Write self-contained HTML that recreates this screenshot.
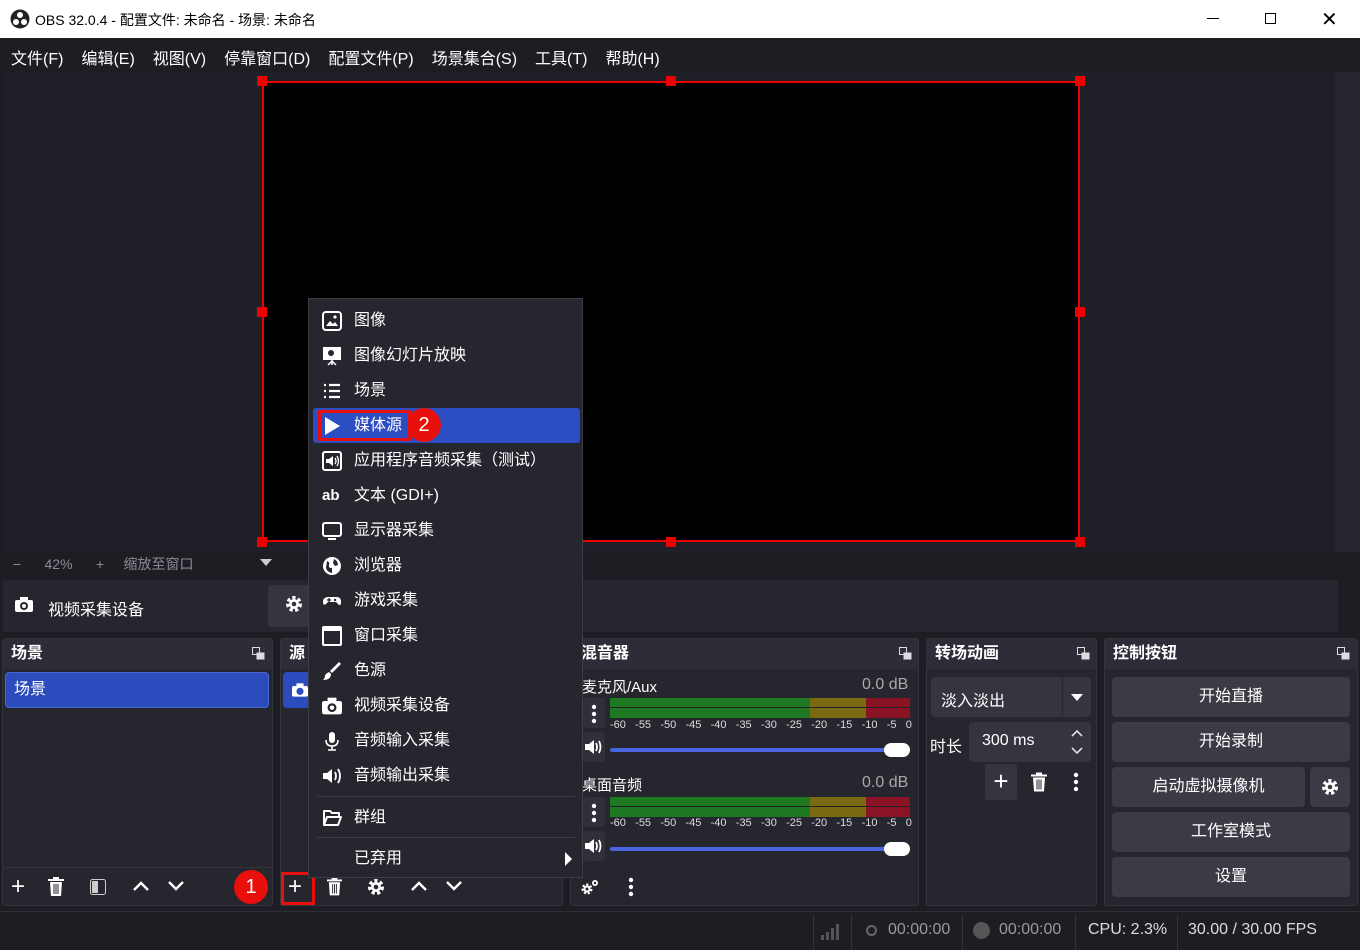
<!DOCTYPE html>
<html><head><meta charset="utf-8"><style>
*{box-sizing:border-box;margin:0;padding:0}
body{width:1360px;height:950px;overflow:hidden;background:#1d1e24;font-family:"Liberation Sans","Noto Sans CJK SC",sans-serif;color:#fff;position:relative}
.a{position:absolute}
.t{white-space:nowrap}
.hdr{position:absolute;height:30px;background:#2c2d36;font-size:16px;font-weight:bold;line-height:30px;padding-left:8px;border-radius:3px 3px 0 0}
.pnl{position:absolute;background:#25262e;border:1px solid #33343c;border-radius:3px}
.btn{position:absolute;background:#3a3b44;border-radius:4px;font-size:16px;text-align:center}
.mi{position:absolute;left:0;width:274px;height:35px;font-size:16px;line-height:35px}
.mi span{position:absolute;left:45px}
.mi svg{position:absolute;left:13px;top:8px}
.tk{position:absolute;display:flex;justify-content:space-between;width:302px;font-size:11px;color:#ddd}
.sb{position:absolute;width:22px;height:30px;background:#2f3038;border-radius:3px}
</style></head><body>
<!-- title -->
<div class="a" style="left:0;top:0;width:1360px;height:38px;background:#fff;color:#000">
<svg class="a" style="left:10px;top:9px" width="20" height="20" viewBox="0 0 20 20"><circle cx="10" cy="10" r="9.5" fill="#222"/><circle cx="10" cy="6" r="3" fill="#fff"/><circle cx="6" cy="13" r="3" fill="#fff"/><circle cx="14" cy="13" r="3" fill="#fff"/></svg>
<div class="a t" style="left:35px;top:10px;font-size:14px">OBS 32.0.4 - 配置文件: 未命名 - 场景: 未命名</div>
<div class="a" style="left:1207px;top:18px;width:12px;height:1px;background:#000"></div>
<div class="a" style="left:1265px;top:13px;width:11px;height:11px;border:1px solid #000"></div>
<div class="a t" style="left:1321px;top:7px;font-size:20px">✕</div>
</div>
<!-- menubar -->
<div class="a t" style="left:11px;top:45px;font-size:16px;word-spacing:0">
<span style="margin-right:18px">文件(F)</span><span style="margin-right:18px">编辑(E)</span><span style="margin-right:18px">视图(V)</span><span style="margin-right:18px">停靠窗口(D)</span><span style="margin-right:18px">配置文件(P)</span><span style="margin-right:18px">场景集合(S)</span><span style="margin-right:18px">工具(T)</span><span>帮助(H)</span></div>
<!-- preview -->
<div class="a" style="left:5px;top:72px;width:1330px;height:480px;background:#1f2027"></div>
<div class="a" style="left:1335px;top:72px;width:25px;height:480px;background:#25262d"></div>
<div class="a" style="left:262px;top:81px;width:818px;height:461px;background:#000;border:2px solid #e00"></div>
<div class="a" style="left:257px;top:76px;width:10px;height:10px;background:#e00"></div>
<div class="a" style="left:666px;top:76px;width:10px;height:10px;background:#e00"></div>
<div class="a" style="left:1075px;top:76px;width:10px;height:10px;background:#e00"></div>
<div class="a" style="left:257px;top:307px;width:10px;height:10px;background:#e00"></div>
<div class="a" style="left:1075px;top:307px;width:10px;height:10px;background:#e00"></div>
<div class="a" style="left:257px;top:537px;width:10px;height:10px;background:#e00"></div>
<div class="a" style="left:666px;top:537px;width:10px;height:10px;background:#e00"></div>
<div class="a" style="left:1075px;top:537px;width:10px;height:10px;background:#e00"></div>
<div class="a t" style="left:13px;top:554px;font-size:14px;color:#8a8b93">−&nbsp;&nbsp;&nbsp;&nbsp;&nbsp;&nbsp;42%&nbsp;&nbsp;&nbsp;&nbsp;&nbsp;&nbsp;+&nbsp;&nbsp;&nbsp;&nbsp;&nbsp;缩放至窗口</div>
<div class="a" style="left:260px;top:559px;border-left:6px solid transparent;border-right:6px solid transparent;border-top:7px solid #ccc"></div>
<!-- source toolbar -->
<div class="a" style="left:3px;top:580px;width:1335px;height:52px;background:#25262e"></div>
<svg class="a" style="left:15px;top:597px" width="18" height="15" viewBox="0 0 18 15"><rect x="0" y="3" width="18" height="12" rx="2" fill="#fff"/><rect x="5" y="0" width="8" height="4" fill="#fff"/><circle cx="9" cy="9" r="4" fill="#25262e"/><circle cx="9" cy="9" r="2" fill="#fff"/></svg>
<div class="a t" style="left:48px;top:596px;font-size:16px">视频采集设备</div>
<div class="a" style="left:268px;top:585px;width:45px;height:42px;background:#34353e;border-radius:4px"></div>
<svg class="a" style="left:285px;top:595px" width="18" height="18" viewBox="0 0 18 18"><circle cx="9" cy="9" r="6" fill="none" stroke="#fff" stroke-width="4" stroke-dasharray="3 2.3"/><circle cx="9" cy="9" r="5" fill="#fff"/><circle cx="9" cy="9" r="2.3" fill="#34353e"/></svg>
<!-- scenes -->
<div class="pnl" style="left:2px;top:638px;width:271px;height:268px"></div>
<div class="hdr" style="left:3px;top:639px;width:269px">场景</div>
<div class="a" style="left:5px;top:672px;width:264px;height:36px;background:#2c4bbd;border:1px solid #4a66d0;border-radius:4px;font-size:16px;line-height:34px;padding-left:8px">场景</div>
<div class="a" style="left:3px;top:867px;width:269px;height:1px;background:#33343c"></div>
<div class="a t" style="left:11px;top:873px;font-size:24px">+</div>
<svg class="a" style="left:48px;top:877px" width="16" height="19" viewBox="0 0 16 19"><rect x="0" y="2" width="16" height="2" fill="#fff"/><rect x="5" y="0" width="6" height="2" fill="#fff"/><path d="M2 5h12l-1 14H3z" fill="#fff"/><path d="M6 7v10M8 7v10M10 7v10" stroke="#25262e" stroke-width="1"/></svg>
<svg class="a" style="left:90px;top:879px" width="16" height="16" viewBox="0 0 16 16"><rect x="0.5" y="0.5" width="15" height="15" rx="2" fill="none" stroke="#ccc"/><rect x="2" y="2" width="6" height="12" fill="#ccc"/></svg>
<svg class="a" style="left:132px;top:880px" width="18" height="12" viewBox="0 0 18 12"><path d="M2 10l7-7 7 7" fill="none" stroke="#fff" stroke-width="2.4"/></svg>
<svg class="a" style="left:167px;top:880px" width="18" height="12" viewBox="0 0 18 12"><path d="M2 2l7 7 7-7" fill="none" stroke="#fff" stroke-width="2.4"/></svg>
<div class="a" style="left:234px;top:870px;width:34px;height:34px;border-radius:50%;background:#e8100c;font-size:20px;line-height:34px;text-align:center">1</div>
<!-- sources -->
<div class="pnl" style="left:280px;top:638px;width:283px;height:268px"></div>
<div class="hdr" style="left:281px;top:639px;width:281px">源</div>
<div class="a" style="left:283px;top:672px;width:40px;height:36px;background:#2c4bbd;border-radius:4px"></div>
<svg class="a" style="left:292px;top:683px" width="16" height="14" viewBox="0 0 18 15"><rect x="0" y="3" width="18" height="12" rx="2" fill="#fff"/><rect x="5" y="0" width="8" height="4" fill="#fff"/><circle cx="9" cy="9" r="4" fill="#2c4bbd"/></svg>
<div class="a" style="left:281px;top:872px;width:34px;height:33px;border:3px solid #e8100c"></div>
<div class="a t" style="left:288px;top:873px;font-size:24px">+</div>
<svg class="a" style="left:327px;top:877px" width="15" height="19" viewBox="0 0 16 19"><rect x="0" y="2" width="16" height="2" fill="#fff"/><rect x="5" y="0" width="6" height="2" fill="#fff"/><path d="M2 5h12l-1 14H3z" fill="#fff"/><path d="M6 7v10M8 7v10M10 7v10" stroke="#25262e"/></svg>
<svg class="a" style="left:367px;top:878px" width="18" height="18" viewBox="0 0 18 18"><circle cx="9" cy="9" r="6" fill="none" stroke="#fff" stroke-width="4" stroke-dasharray="3 2.3"/><circle cx="9" cy="9" r="5" fill="#fff"/><circle cx="9" cy="9" r="2.3" fill="#25262e"/></svg>
<svg class="a" style="left:410px;top:880px" width="18" height="12" viewBox="0 0 18 12"><path d="M2 10l7-7 7 7" fill="none" stroke="#fff" stroke-width="2.4"/></svg>
<svg class="a" style="left:445px;top:880px" width="18" height="12" viewBox="0 0 18 12"><path d="M2 2l7 7 7-7" fill="none" stroke="#fff" stroke-width="2.4"/></svg>
<!-- mixer -->
<div class="pnl" style="left:570px;top:638px;width:349px;height:268px"></div>
<div class="hdr" style="left:571px;top:639px;width:347px;padding-left:10px">混音器</div>
<div class="a t" style="left:582px;top:676px;font-size:15px">麦克风/Aux</div>
<div class="a t" style="left:862px;top:676px;font-size:16px;color:#aaa">0.0 dB</div>
<div class="a" style="left:610px;top:698px;width:200px;height:20px;background:#1d7a22"></div>
<div class="a" style="left:810px;top:698px;width:56px;height:20px;background:#7a6a12"></div>
<div class="a" style="left:866px;top:698px;width:44px;height:20px;background:#8a1325"></div>
<div class="a" style="left:610px;top:707px;width:300px;height:1px;background:#222"></div>
<div class="tk" style="left:610px;top:719px"><span>-60</span><span>-55</span><span>-50</span><span>-45</span><span>-40</span><span>-35</span><span>-30</span><span>-25</span><span>-20</span><span>-15</span><span>-10</span><span>-5</span><span>0</span></div>
<div class="a" style="left:610px;top:748px;width:290px;height:4px;background:#4b64e0;border-radius:2px"></div>
<div class="a" style="left:884px;top:743px;width:26px;height:14px;background:#fff;border-radius:7px"></div>
<div class="a t" style="left:582px;top:774px;font-size:15px">桌面音频</div>
<div class="a t" style="left:862px;top:774px;font-size:16px;color:#aaa">0.0 dB</div>
<div class="a" style="left:610px;top:797px;width:200px;height:20px;background:#1d7a22"></div>
<div class="a" style="left:810px;top:797px;width:56px;height:20px;background:#7a6a12"></div>
<div class="a" style="left:866px;top:797px;width:44px;height:20px;background:#8a1325"></div>
<div class="a" style="left:610px;top:806px;width:300px;height:1px;background:#222"></div>
<div class="tk" style="left:610px;top:817px"><span>-60</span><span>-55</span><span>-50</span><span>-45</span><span>-40</span><span>-35</span><span>-30</span><span>-25</span><span>-20</span><span>-15</span><span>-10</span><span>-5</span><span>0</span></div>
<div class="a" style="left:610px;top:847px;width:290px;height:4px;background:#4b64e0;border-radius:2px"></div>
<div class="a" style="left:884px;top:842px;width:26px;height:14px;background:#fff;border-radius:7px"></div>
<div class="sb" style="left:583px;top:698px"></div>
<div class="sb" style="left:583px;top:732px"></div>
<div class="sb" style="left:583px;top:797px"></div>
<div class="sb" style="left:583px;top:831px"></div>
<svg class="a" style="left:591px;top:704px" width="6" height="20" viewBox="0 0 6 20"><circle cx="3" cy="3" r="2.2" fill="#fff"/><circle cx="3" cy="10" r="2.2" fill="#fff"/><circle cx="3" cy="17" r="2.2" fill="#fff"/></svg>
<svg class="a" style="left:591px;top:803px" width="6" height="20" viewBox="0 0 6 20"><circle cx="3" cy="3" r="2.2" fill="#fff"/><circle cx="3" cy="10" r="2.2" fill="#fff"/><circle cx="3" cy="17" r="2.2" fill="#fff"/></svg>
<svg class="a" style="left:584px;top:738px" width="20" height="18" viewBox="0 0 20 18"><path d="M1 6h4l5-4v14l-5-4H1z" fill="#fff"/><path d="M12 5q2 4 0 8M15 3q3 6 0 12" fill="none" stroke="#fff" stroke-width="1.8"/></svg>
<svg class="a" style="left:584px;top:837px" width="20" height="18" viewBox="0 0 20 18"><path d="M1 6h4l5-4v14l-5-4H1z" fill="#fff"/><path d="M12 5q2 4 0 8M15 3q3 6 0 12" fill="none" stroke="#fff" stroke-width="1.8"/></svg>
<svg class="a" style="left:580px;top:878px" width="20" height="18" viewBox="0 0 20 18"><circle cx="7" cy="11" r="4" fill="none" stroke="#fff" stroke-width="3" stroke-dasharray="2 1.6"/><circle cx="7" cy="11" r="3.5" fill="#fff"/><circle cx="7" cy="11" r="1.5" fill="#25262e"/><circle cx="15" cy="5" r="3" fill="#fff"/><circle cx="15" cy="5" r="1.2" fill="#25262e"/></svg>
<svg class="a" style="left:628px;top:877px" width="6" height="20" viewBox="0 0 6 20"><circle cx="3" cy="3" r="2.2" fill="#fff"/><circle cx="3" cy="10" r="2.2" fill="#fff"/><circle cx="3" cy="17" r="2.2" fill="#fff"/></svg>
<!-- transitions -->
<div class="pnl" style="left:926px;top:638px;width:171px;height:268px"></div>
<div class="hdr" style="left:927px;top:639px;width:169px">转场动画</div>
<div class="a" style="left:931px;top:677px;width:160px;height:40px;background:#34353e;border-radius:4px"></div>
<div class="a" style="left:1062px;top:677px;width:1px;height:40px;background:#26272f"></div>
<div class="a t" style="left:941px;top:687px;font-size:16px">淡入淡出</div>
<div class="a" style="left:1071px;top:694px;border-left:6px solid transparent;border-right:6px solid transparent;border-top:7px solid #fff"></div>
<div class="a t" style="left:930px;top:733px;font-size:16px">时长</div>
<div class="a" style="left:969px;top:722px;width:122px;height:40px;background:#34353e;border-radius:4px"></div>
<div class="a t" style="left:982px;top:732px;font-size:16px">300 ms</div>
<svg class="a" style="left:1070px;top:727px" width="14" height="30" viewBox="0 0 14 30"><path d="M2 9l5-5 5 5M2 21l5 5 5-5" fill="none" stroke="#ddd" stroke-width="1.6"/></svg>
<div class="a" style="left:985px;top:764px;width:32px;height:36px;background:#34353e;border-radius:3px;font-size:26px;line-height:34px;text-align:center">+</div>
<svg class="a" style="left:1031px;top:772px" width="16" height="20" viewBox="0 0 16 19"><rect x="0" y="2" width="16" height="2" fill="#fff"/><rect x="5" y="0" width="6" height="2" fill="#fff"/><path d="M2 5h12l-1 14H3z" fill="#fff"/><path d="M6 7v10M8 7v10M10 7v10" stroke="#25262e"/></svg>
<svg class="a" style="left:1073px;top:772px" width="6" height="20" viewBox="0 0 6 20"><circle cx="3" cy="3" r="2.2" fill="#fff"/><circle cx="3" cy="10" r="2.2" fill="#fff"/><circle cx="3" cy="17" r="2.2" fill="#fff"/></svg>
<!-- controls -->
<div class="pnl" style="left:1104px;top:638px;width:254px;height:268px"></div>
<div class="hdr" style="left:1105px;top:639px;width:252px">控制按钮</div>
<div class="btn" style="left:1112px;top:677px;width:238px;height:40px;line-height:40px">开始直播</div>
<div class="btn" style="left:1112px;top:722px;width:238px;height:40px;line-height:40px">开始录制</div>
<div class="btn" style="left:1112px;top:767px;width:193px;height:40px;line-height:40px">启动虚拟摄像机</div>
<div class="btn" style="left:1310px;top:767px;width:40px;height:40px"></div>
<svg class="a" style="left:1321px;top:778px" width="18" height="18" viewBox="0 0 18 18"><circle cx="9" cy="9" r="6" fill="none" stroke="#fff" stroke-width="4" stroke-dasharray="3 2.3"/><circle cx="9" cy="9" r="5" fill="#fff"/><circle cx="9" cy="9" r="2.3" fill="#3a3b44"/></svg>
<div class="btn" style="left:1112px;top:812px;width:238px;height:40px;line-height:40px">工作室模式</div>
<div class="btn" style="left:1112px;top:857px;width:238px;height:40px;line-height:40px">设置</div>
<!-- dock icons -->
<svg class="a" style="left:252px;top:647px" width="13" height="13" viewBox="0 0 13 13"><rect x="0.5" y="0.5" width="7" height="7" fill="none" stroke="#ddd"/><rect x="4.5" y="5.5" width="8" height="7" fill="#ddd"/></svg>
<svg class="a" style="left:899px;top:647px" width="13" height="13" viewBox="0 0 13 13"><rect x="0.5" y="0.5" width="7" height="7" fill="none" stroke="#ddd"/><rect x="4.5" y="5.5" width="8" height="7" fill="#ddd"/></svg>
<svg class="a" style="left:1077px;top:647px" width="13" height="13" viewBox="0 0 13 13"><rect x="0.5" y="0.5" width="7" height="7" fill="none" stroke="#ddd"/><rect x="4.5" y="5.5" width="8" height="7" fill="#ddd"/></svg>
<svg class="a" style="left:1337px;top:647px" width="13" height="13" viewBox="0 0 13 13"><rect x="0.5" y="0.5" width="7" height="7" fill="none" stroke="#ddd"/><rect x="4.5" y="5.5" width="8" height="7" fill="#ddd"/></svg>
<!-- status -->
<div class="a" style="left:0;top:911px;width:1360px;height:1px;background:#2e2f36"></div>
<div class="a" style="left:813px;top:915px;width:1px;height:35px;background:#33343b"></div>
<div class="a" style="left:851px;top:915px;width:1px;height:35px;background:#33343b"></div>
<div class="a" style="left:962px;top:915px;width:1px;height:35px;background:#33343b"></div>
<div class="a" style="left:1075px;top:915px;width:1px;height:35px;background:#33343b"></div>
<div class="a" style="left:1177px;top:915px;width:1px;height:35px;background:#33343b"></div>
<svg class="a" style="left:820px;top:922px" width="22" height="18" viewBox="0 0 22 18"><rect x="1" y="13" width="3" height="5" fill="#555"/><rect x="6" y="10" width="3" height="8" fill="#555"/><rect x="11" y="6" width="3" height="12" fill="#555"/><rect x="16" y="2" width="3" height="16" fill="#555"/></svg>
<div class="a" style="left:866px;top:925px;width:11px;height:11px;border-radius:50%;border:2px solid #666"></div>
<div class="a t" style="left:888px;top:921px;font-size:16px;color:#999">00:00:00</div>
<div class="a" style="left:973px;top:922px;width:17px;height:17px;border-radius:50%;background:#555"></div>
<div class="a t" style="left:999px;top:921px;font-size:16px;color:#999">00:00:00</div>
<div class="a t" style="left:1088px;top:921px;font-size:16px;color:#ddd">CPU: 2.3%</div>
<div class="a t" style="left:1188px;top:921px;font-size:16px;color:#ddd">30.00 / 30.00 FPS</div>
<!-- context menu -->
<div class="a" style="left:308px;top:298px;width:275px;height:580px;background:#25262e;border:1px solid #3c3d45">
<div class="a" style="left:4px;top:109px;width:267px;height:35px;background:#2d4ec2;border-radius:3px"></div>
<div class="a" style="left:9px;top:111px;width:93px;height:31px;border:3px solid #e8100c"></div>
<div class="a" style="left:98px;top:109px;width:34px;height:34px;border-radius:50%;background:#e8100c;font-size:20px;line-height:34px;text-align:center">2</div>
<div class="mi" style="top:4px"><svg width="20" height="20" viewBox="0 0 20 20"><rect x="1" y="1" width="18" height="18" rx="3" fill="none" stroke="#fff" stroke-width="2"/><path d="M4 15l4-5 3 3 2-2 3 4z" fill="#fff"/><circle cx="13" cy="6" r="1.6" fill="#fff"/></svg><span>图像</span></div>
<div class="mi" style="top:39px"><svg width="20" height="20" viewBox="0 0 20 20"><rect x="1" y="1" width="18" height="13" fill="#fff"/><circle cx="9" cy="7" r="3" fill="#25262e"/><path d="M10 14v5M10 15l-4 4M10 15l4 4" stroke="#fff" stroke-width="1.5"/></svg><span>图像幻灯片放映</span></div>
<div class="mi" style="top:74px"><svg width="20" height="20" viewBox="0 0 20 20"><path d="M2 4h2M7 4h11M2 10h2M7 10h11M2 16h2M7 16h11" stroke="#fff" stroke-width="2.2"/></svg><span>场景</span></div>
<div class="mi" style="top:109px"><svg width="20" height="20" viewBox="0 0 20 20"><path d="M3 1l15 9-15 9z" fill="#fff"/></svg><span>媒体源</span></div>
<div class="mi" style="top:144px"><svg width="20" height="20" viewBox="0 0 20 20"><rect x="1" y="1" width="18" height="18" rx="2" fill="none" stroke="#fff" stroke-width="2"/><path d="M4 8h3l4-3v10l-4-3H4z" fill="#fff"/><path d="M13 7q2 3 0 6M15 5q3 5 0 10" fill="none" stroke="#fff" stroke-width="1.3"/></svg><span>应用程序音频采集（测试）</span></div>
<div class="mi" style="top:179px"><span style="left:13px;font-weight:bold;font-size:15px">ab</span><span>文本 (GDI+)</span></div>
<div class="mi" style="top:214px"><svg width="20" height="20" viewBox="0 0 20 20"><rect x="1" y="2" width="18" height="13" rx="2" fill="none" stroke="#fff" stroke-width="2"/><path d="M6 18h8" stroke="#fff" stroke-width="2"/></svg><span>显示器采集</span></div>
<div class="mi" style="top:249px"><svg width="20" height="20" viewBox="0 0 20 20"><circle cx="10" cy="10" r="9" fill="#fff"/><path d="M5 5q3 1 2 4t3 3v5q-5-1-6-5zM12 3q4 2 4 6l-3 1-2-3z" fill="#25262e"/></svg><span>浏览器</span></div>
<div class="mi" style="top:284px"><svg width="20" height="20" viewBox="0 0 20 20"><path d="M5 6h10q4 0 4 5t-3 2l-2-2H6l-2 2q-3 2-3-2t4-5z" fill="#fff"/><circle cx="13" cy="9" r="1.2" fill="#25262e"/><path d="M5 9h4M7 7v4" stroke="#25262e" stroke-width="1.3"/></svg><span>游戏采集</span></div>
<div class="mi" style="top:319px"><svg width="20" height="20" viewBox="0 0 20 20"><rect x="1" y="1" width="18" height="18" rx="1" fill="none" stroke="#fff" stroke-width="2"/><rect x="1" y="1" width="18" height="4" fill="#fff"/></svg><span>窗口采集</span></div>
<div class="mi" style="top:354px"><svg width="20" height="20" viewBox="0 0 20 20"><path d="M17 1l2 2-9 9-2-2z" fill="#fff"/><path d="M7 11l2 2q0 6-8 6 2-2 2-4t4-4z" fill="#fff"/></svg><span>色源</span></div>
<div class="mi" style="top:389px"><svg width="20" height="20" viewBox="0 0 18 15"><rect x="0" y="3" width="18" height="12" rx="2" fill="#fff"/><rect x="5" y="0" width="8" height="4" fill="#fff"/><circle cx="9" cy="9" r="4" fill="#25262e"/><circle cx="9" cy="9" r="2" fill="#fff"/></svg><span>视频采集设备</span></div>
<div class="mi" style="top:424px"><svg width="20" height="20" viewBox="0 0 20 20"><rect x="7" y="1" width="6" height="11" rx="3" fill="#fff"/><path d="M4 9q0 6 6 6t6-6M10 15v4M6 19h8" fill="none" stroke="#fff" stroke-width="1.6"/></svg><span>音频输入采集</span></div>
<div class="mi" style="top:459px"><svg width="20" height="20" viewBox="0 0 20 20"><path d="M1 7h4l5-4v14l-5-4H1z" fill="#fff"/><path d="M13 6q2 4 0 8M16 3q4 7 0 14" fill="none" stroke="#fff" stroke-width="1.8"/></svg><span>音频输出采集</span></div>
<div class="a" style="left:8px;top:497px;width:258px;height:1px;background:#3c3d45"></div>
<div class="mi" style="top:501px"><svg width="20" height="20" viewBox="0 0 20 20"><path d="M2 17V3h6l2 2h7v3M2 17l3-8h14l-3 8z" fill="none" stroke="#fff" stroke-width="2" stroke-linejoin="round"/></svg><span>群组</span></div>
<div class="a" style="left:8px;top:538px;width:258px;height:1px;background:#3c3d45"></div>
<div class="mi" style="top:542px"><span>已弃用</span><div class="a" style="left:256px;top:11px;border-top:7px solid transparent;border-bottom:7px solid transparent;border-left:7px solid #fff"></div></div>
</div>
</body></html>
